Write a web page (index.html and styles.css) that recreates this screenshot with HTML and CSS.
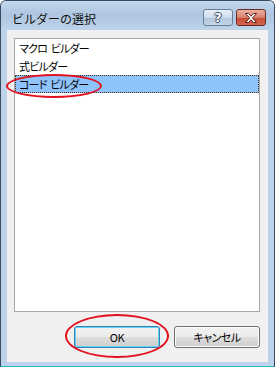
FILE: index.html
```html
<!DOCTYPE html>
<html lang="ja">

<head>
    <meta charset="UTF-8">
    <title>ビルダーの選択</title>
    <link rel="stylesheet" href="styles.css">
</head>

<body>

    <div class="window">
        <div class="titlebar">
            <span class="title">ビルダーの選択</span>
            <div class="caption-btns">
                <span class="cap-btn help">?</span>
                <span class="cap-btn close">
                    <svg width="14" height="10" viewBox="0 0 14 10">
                        <path d="M1.5 0.5h3l2.5 2.7 2.5-2.7h3l-4 4.5 4 4.5h-3l-2.5-2.7-2.5 2.7h-3l4-4.5z"
                            fill="#fff" stroke="#5b231a" stroke-width="1" stroke-linejoin="round" />
                    </svg>
                </span>
            </div>
        </div>

        <div class="client">
            <ul class="listbox">
                <li>マクロ ビルダー</li>
                <li>式ビルダー</li>
                <li class="selected">コード ビルダー</li>
            </ul>
            <div class="buttons">
                <button class="btn default">OK</button>
                <button class="btn">キャンセル</button>
            </div>
        </div>

        <!-- red annotation rings -->
        <div class="mark mark-list"></div>
        <div class="mark mark-ok"></div>
    </div>

</body>
</html>
```

FILE: styles.css
```css
body {
    margin: 0;
    background-color: #ffffff;
    font-family: "Noto Sans CJK JP", "Noto Sans", sans-serif;
}

.window {
    position: relative;
    width: 275px;
    height: 367px;
    box-sizing: border-box;
    border: 1px solid #3a4a5c;
    border-bottom-color: #2cb4cb;
    border-radius: 6px 6px 0 0;
    background-color: #bcd3ea;
    display: flex;
    flex-direction: column;
}

.titlebar {
    height: 29px;
    display: flex;
    justify-content: space-between;
    padding: 0 8px 0 11px;
    border-radius: 5px 5px 0 0;
    background: linear-gradient(#c4d8ee, #aec6e0 45%, #b6cce5 75%, #bcd3ea);
}

.title {
    margin-top: 9px;
    font-size: 12px;
    line-height: 17px;
    color: #111111;
}

.caption-btns {
    display: flex;
    gap: 3px;
    margin-top: 8px;
}

.cap-btn {
    width: 30px;
    height: 17px;
    box-sizing: border-box;
    border-radius: 3px;
    display: flex;
    justify-content: center;
    align-items: center;
}

.help {
    border: 1px solid #6a7e96;
    background: linear-gradient(#e6eef7, #cddcec 50%, #b3c7dd 51%, #c2d4e7);
    color: #ffffff;
    font-family: "DejaVu Sans", sans-serif;
    font-weight: bold;
    font-size: 13px;
    text-shadow: 1px 0 0 #3d4e63, -1px 0 0 #3d4e63, 0 1px 0 #3d4e63, 0 -1px 0 #3d4e63;
}

.close {
    border: 1px solid #6b2a20;
    background: linear-gradient(#eab0a3, #d9806e 50%, #c74a34 51%, #d2664c);
}

.client {
    flex: 1;
    margin: 0 6px 4px 6px;
    padding: 8px 8px 0 7px;
    background-color: #f0f0f0;
}

.listbox {
    list-style: none;
    margin: 0;
    padding: 0;
    height: 274px;
    box-sizing: border-box;
    border: 1px solid #a8a8a8;
    background-color: #ffffff;
}

.listbox li {
    height: 18px;
    line-height: 18px;
    padding-left: 4px;
    font-size: 11px;
    letter-spacing: -0.8px;
    word-spacing: 2px;
    font-feature-settings: "palt";
    color: #000000;
}

.listbox li.selected {
    background-color: #8fc3fb;
    outline: 1px dotted #4a3010;
    outline-offset: -1px;
}

.buttons {
    display: flex;
    justify-content: flex-end;
    gap: 14px;
    margin-top: 14px;
}

.btn {
    width: 86px;
    height: 22px;
    padding: 0;
    border: 1px solid #707070;
    border-radius: 3px;
    background: linear-gradient(#f2f2f2, #ebebeb 50%, #dddddd 51%, #cfcfcf);
    box-shadow: inset 0 0 0 1px #fbfbfb;
    font-family: "Noto Sans CJK JP", "Noto Sans", sans-serif;
    font-size: 11px;
    letter-spacing: -0.5px;
    font-feature-settings: "palt";
    color: #000000;
}

.btn.default {
    border-color: #3c7fb1;
    box-shadow: inset 0 0 0 1px #5fd4fb;
}

.mark {
    position: absolute;
    border: 2px solid #e3101e;
    border-radius: 50%;
    box-sizing: border-box;
}

.mark-list {
    left: 5px;
    top: 73px;
    width: 96px;
    height: 24px;
}

.mark-ok {
    left: 64px;
    top: 313px;
    width: 104px;
    height: 44px;
}
```
